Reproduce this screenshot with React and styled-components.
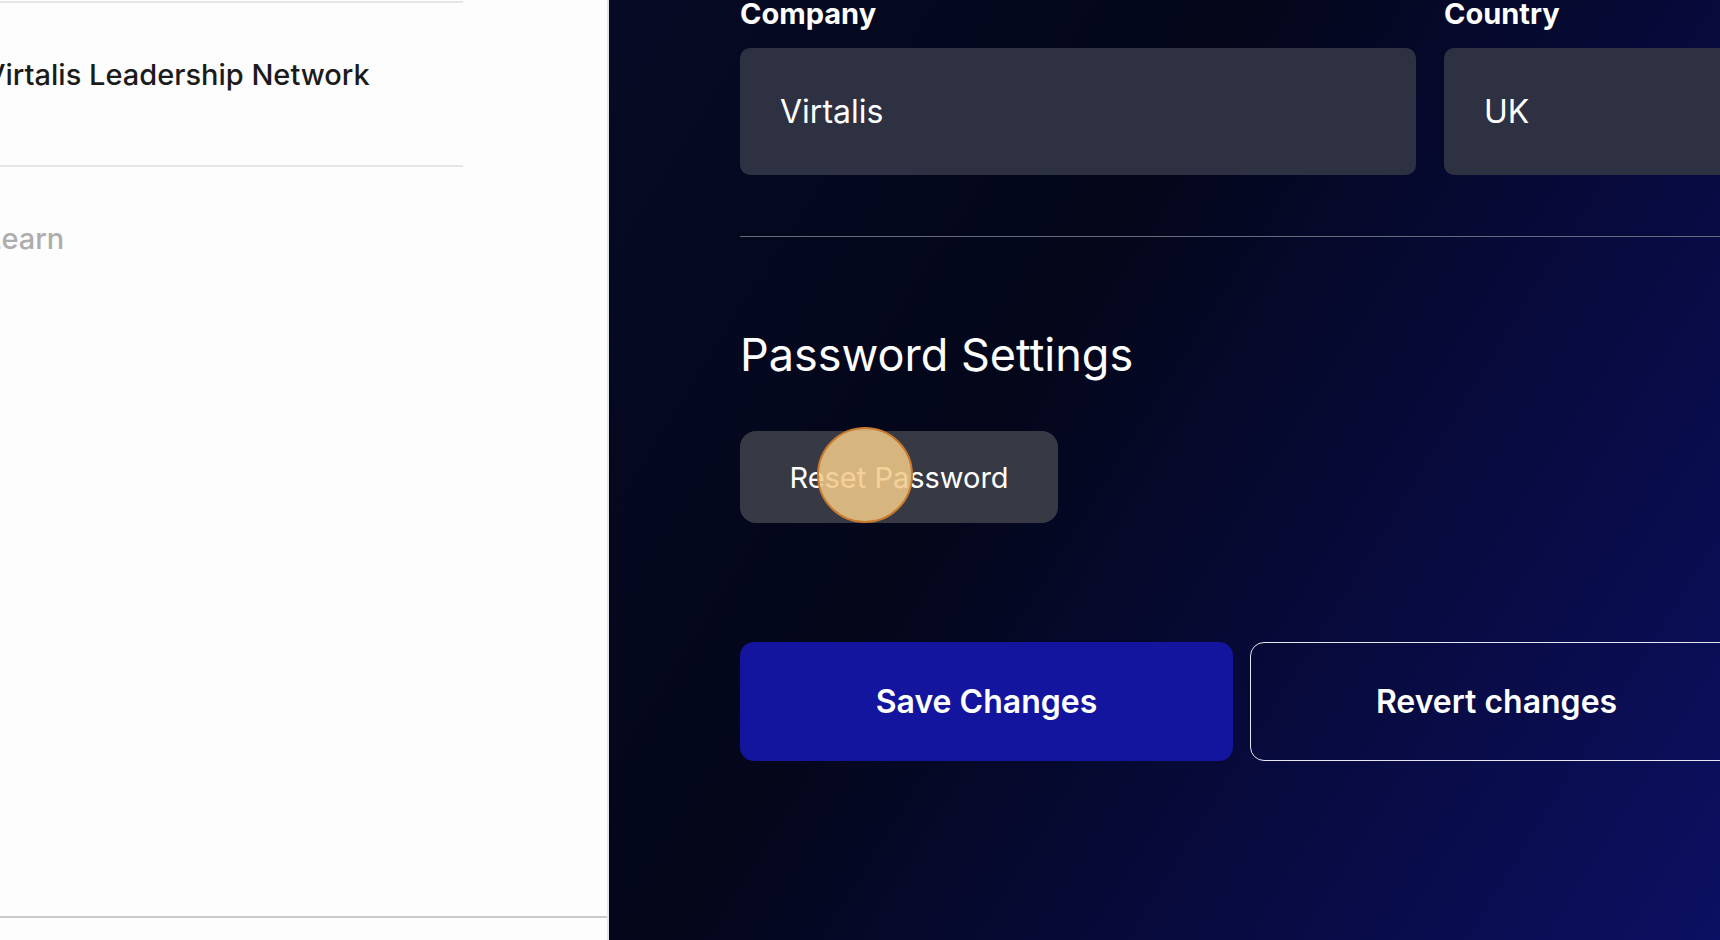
import styled, { createGlobalStyle } from "styled-components"

// Global reset

const GlobalStyle = createGlobalStyle`
  * { box-sizing: border-box; }
  html, body {
    margin: 0;
    padding: 0;
    height: 100%;
    overflow: hidden;
    font-family: Inter, "Noto Sans", "Liberation Sans", sans-serif;
  }
  #root { height: 100%; }
`

const Page = styled.div`
  display: flex;
  height: 940px;
  width: 100%;
  overflow: hidden;
`

// Left sidebar

const Sidebar = styled.aside`
  width: 609px;
  flex-shrink: 0;
  background-color: #fdfdfd;
  border-right: 2px solid #e4e4e4;
  display: flex;
  flex-direction: column;
  justify-content: space-between;
  padding-top: 1px;
`
const List = styled.ul`
  list-style: none;
  margin: 0 0 0 -15px;
  padding: 0;
  width: 478px;
`
const Item = styled.li`
  border-top: 2px solid #e6e6e6;
  height: ${props => props.tall ? "164px" : "auto"};
  padding-top: 54px;
  font-size: 29px;
  line-height: 35px;
  font-weight: 500;
  color: ${props => props.muted ? "#adadad" : "#1b1b1b"};
`
const Footer = styled.div`
  border-top: 2px solid #cbcbcb;
  height: 24px;
`

// Right settings panel

const Main = styled.main`
  flex: 1;
  min-width: 0;
  overflow: hidden;
  padding-left: 131px;
  background: linear-gradient(122deg, #060a24 0%, #04071a 38%, #070a3a 65%, #0c1062 100%);
  color: #ffffff;
`
const Form = styled.div`
  width: 1400px;
`
const Fields = styled.div`
  display: grid;
  grid-template-columns: 676px 676px;
  column-gap: 28px;
`
const Field = styled.div`
  display: flex;
  flex-direction: column;
  gap: 20px;
`
const Label = styled.label`
  font-size: 29px;
  line-height: 28px;
  font-weight: 700;
`
const Input = styled.div`
  height: 127px;
  border-radius: 10px;
  background-color: #2e3142;
  display: flex;
  align-items: center;
  padding: 0 40px;
  font-size: 32px;
`
const Divider = styled.hr`
  margin: 61px 0 0;
  border: none;
  border-top: 1.5px solid #676a7c;
`
const Heading = styled.h2`
  margin: 91px 0 0;
  font-size: 45px;
  line-height: 54px;
  font-weight: 400;
`
const ResetButton = styled.button`
  position: relative;
  margin-top: 49px;
  width: 318px;
  height: 92px;
  border: none;
  border-radius: 16px;
  background-color: #373945;
  color: #ffffff;
  font-family: inherit;
  font-size: 29px;
  cursor: pointer;
`
const ClickMark = styled.span`
  position: absolute;
  left: 77px;
  top: -4px;
  width: 96px;
  height: 96px;
  border-radius: 50%;
  border: 2.5px solid #c97a2c;
  background-color: rgba(242, 202, 137, 0.86);
`
const Actions = styled.div`
  display: flex;
  gap: 17px;
  margin-top: 119px;
`
const ActionButton = styled.button`
  width: 493px;
  height: 119px;
  flex-shrink: 0;
  border-radius: 14px;
  border: ${props => props.primary ? "none" : "1.5px solid #e6e6f0"};
  background-color: ${props => props.primary ? "#13159e" : "transparent"};
  color: #ffffff;
  font-family: inherit;
  font-size: 32px;
  font-weight: 600;
  cursor: pointer;
`

const App = () => {
  return (
    <>
      <GlobalStyle />
      <Page>
        <Sidebar>
          <List>
            <Item tall>Virtalis Leadership Network</Item>
            <Item muted>Learn</Item>
          </List>
          <Footer />
        </Sidebar>

        <Main>
          <Form>
            <Fields>
              <Field>
                <Label>Company</Label>
                <Input>Virtalis</Input>
              </Field>
              <Field>
                <Label>Country</Label>
                <Input>UK</Input>
              </Field>
            </Fields>

            <Divider />

            <Heading>Password Settings</Heading>
            <ResetButton>
              Reset Password
              <ClickMark />
            </ResetButton>

            <Actions>
              <ActionButton primary>Save Changes</ActionButton>
              <ActionButton>Revert changes</ActionButton>
            </Actions>
          </Form>
        </Main>
      </Page>
    </>
  )
}

export default App
